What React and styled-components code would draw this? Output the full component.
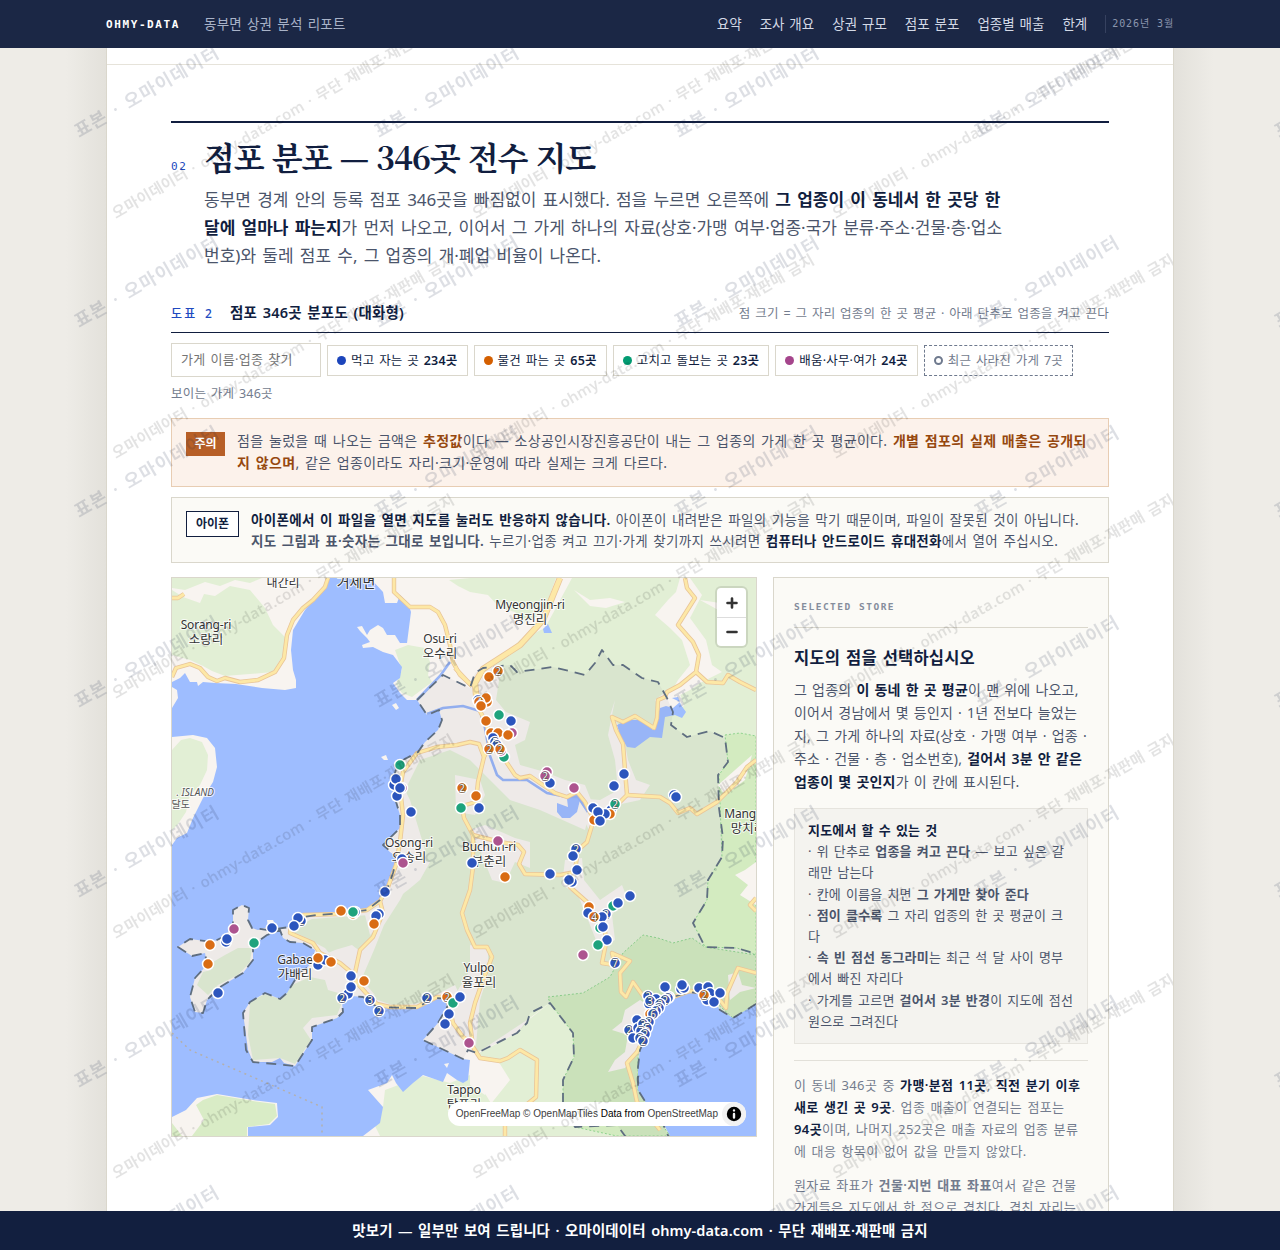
import React from 'react';
import styled, { createGlobalStyle, css } from 'styled-components';

const SANS = '"Noto Sans", "Noto Sans CJK KR", sans-serif';
const SERIF = '"Noto Serif CJK KR", "Noto Serif KR", "Nanum Myeongjo", serif';
const MONO = '"DejaVu Sans Mono", "Noto Sans Mono CJK KR", monospace';

const C = {
  navy: '#111e3f',
  body: '#4b556b',
  muted: '#737c8e',
  blue: '#2049c0',
  line: '#dad7cc',
  paper: '#fbfaf6',
  warn: '#96480f',
};

const GlobalStyle = createGlobalStyle`
  * { box-sizing: border-box; }
  html, body { margin: 0; height: 1250px; overflow: hidden; }
  body { background: #eeece7; font-family: ${SANS}; color: ${C.body}; }
  p, h2, h3 { margin: 0; }
`;

const Screen = styled.div`
  position: relative;
  height: 1250px;
  overflow: hidden;
  display: flex;
  flex-direction: column;
`;

const Nav = styled.header`
  position: relative;
  z-index: 5;
  flex: none;
  height: 48px;
  background: #1b2745;
  display: flex;
  justify-content: center;
`;
const NavInner = styled.div`
  width: 1068px;
  display: flex;
  align-items: center;
`;
const Brand = styled.span`
  font: 700 11px/1 ${MONO};
  letter-spacing: 1.6px;
  color: #fff;
  margin-right: 24px;
`;
const NavTitle = styled.span`
  margin-top: -3px;
  font-size: 13.5px;
  letter-spacing: 0.2px;
  word-spacing: 1.4px;
  color: #a9b3c8;
`;
const NavLinks = styled.nav`
  margin: -3px 0 0 auto;
  display: flex;
  gap: 18px;
  font-size: 13.5px;
  word-spacing: 1.4px;
  color: #d3d9e6;
`;
const NavDate = styled.span`
  margin-left: 18px;
  padding-left: 6px;
  border-left: 1px solid #36415f;
  font: 400 10px/18px ${MONO};
  letter-spacing: 0.9px;
  color: #8b96ae;
`;

const SheetShadow = styled.div`
  flex: 1;
  min-height: 0;
  display: flex;
  justify-content: center;
  background: linear-gradient(90deg, #eeece7 66px, #e3e1db 106px, #e3e1db 1174px, #eeece7 1214px);
`;
const Sheet = styled.main`
  flex: none;
  width: 1068px;
  overflow: hidden;
  position: relative;
  background: #fff;
  border: solid ${C.line};
  border-width: 0 1px;
`;
const PrevEdge = styled.div`
  height: 17px;
  border-bottom: 1px solid #e6e3da;
`;
const Section = styled.section`
  margin: 56px 64px 0;
  border-top: 2px solid ${C.navy};
`;
const SectionHead = styled.div`
  display: grid;
  grid-template-columns: 33px 1fr;
  align-items: baseline;
  padding-top: 10px;
`;
const SectionNo = styled.span`
  font: 400 11px/1 ${MONO};
  letter-spacing: 1.6px;
  color: ${C.blue};
`;
const Title = styled.h2`
  font: 700 32px/46px ${SERIF};
  letter-spacing: -1.1px;
  word-spacing: 1.2px;
  color: ${C.navy};
`;
const Lead = styled.p`
  grid-column: 2;
  width: 806px;
  margin-top: 7px;
  font-size: 17px;
  line-height: 28px;
  word-spacing: 1.8px;
`;
const B = styled.b`
  font-weight: 600;
  white-space: ${(p) => (p.$keep ? 'nowrap' : 'inherit')};
  color: ${(p) => (p.$tone === 'warn' ? C.warn : p.$tone === 'soft' ? 'inherit' : C.navy)};
`;

const FigHead = styled.div`
  display: flex;
  align-items: center;
  margin-top: 31px;
  height: 32px;
  border-bottom: 1px solid ${C.navy};
  padding-bottom: 8px;
`;
const FigNo = styled.span`
  margin-top: 2px;
  font: 500 12px/1 ${SANS};
  letter-spacing: 2.2px;
  word-spacing: 2.2px;
  color: ${C.blue};
  margin-right: 16px;
`;
const FigTitle = styled.h3`
  margin-top: -2px;
  font: 600 14.5px/20px ${SANS};
  letter-spacing: 0.2px;
  word-spacing: 1.6px;
  color: ${C.navy};
`;
const FigNote = styled.span`
  margin-left: auto;
  font-size: 12.5px;
  letter-spacing: 0.24px;
  word-spacing: 1.2px;
  color: ${C.muted};
`;

const Filters = styled.div`
  display: flex;
  flex-wrap: wrap;
  align-items: center;
  gap: 6px;
  margin-top: 10px;
  letter-spacing: 0.2px;
  word-spacing: 1.3px;
`;
const Search = styled.div`
  width: 150px;
  height: 34px;
  padding: 0 9px;
  border: 1px solid ${C.line};
  background: #fff;
  font-size: 13px;
  letter-spacing: 0.3px;
  line-height: 31px;
  color: #757575;
`;
const Chip = styled.div`
  display: flex;
  align-items: center;
  gap: 5px;
  height: 31px;
  padding: 0 9px;
  border: 1px ${(p) => (p.$gone ? 'dashed #6f7a8e' : `solid ${C.line}`)};
  background: #fff;
  font-size: 12.5px;
  color: ${(p) => (p.$gone ? C.muted : C.navy)};
  span { padding-bottom: 2px; }
`;
const Bullet = styled.i`
  width: 9px;
  height: 9px;
  border-radius: 50%;
  ${(p) => (p.$color ? css`background: ${p.$color};` : css`border: 2px solid #6f7a8e;`)}
`;
const Count = styled.div`
  width: 100%;
  padding-top: 1px;
  font-size: 12.5px;
  line-height: 19px;
  color: ${C.muted};
`;

const Callout = styled.div`
  display: flex;
  align-items: flex-start;
  gap: 12px;
  margin-top: ${(p) => (p.$warn ? 15 : 10)}px;
  height: ${(p) => (p.$warn ? 69 : 66)}px;
  padding: 12px 14px;
  border: 1px solid ${(p) => (p.$warn ? '#e8cdb3' : C.line)};
  background: ${(p) => (p.$warn ? '#fcf2eb' : C.paper)};
  font-size: ${(p) => (p.$warn ? 14 : 13.5)}px;
  line-height: ${(p) => (p.$warn ? 22 : 20.8)}px;
  letter-spacing: ${(p) => (p.$warn ? 0.34 : 0.31)}px;
  word-spacing: 1.5px;
  p { margin-top: ${(p) => (p.$warn ? -1 : 0)}px; }
`;
const Tag = styled.span`
  flex: none;
  margin-top: 1px;
  width: ${(p) => (p.$warn ? 39 : 53)}px;
  text-align: center;
  border: 1px solid ${(p) => (p.$warn ? '#b75f27' : C.navy)};
  background: ${(p) => (p.$warn ? '#b75f27' : '#fff')};
  color: ${(p) => (p.$warn ? '#fff' : C.navy)};
  font-weight: 600;
  font-size: 12px;
  letter-spacing: 0;
  line-height: ${(p) => (p.$warn ? 22 : 24)}px;
`;

const Columns = styled.div`
  display: grid;
  grid-template-columns: 586px 336px;
  gap: 16px;
  align-items: start;
  margin-top: 14px;
`;
const MapBox = styled.div`
  position: relative;
  height: 560px;
  border: 1px solid ${C.line};
  overflow: hidden;
  svg.map { display: block; width: 584px; height: 558px; }
`;
const ZoomCtl = styled.div`
  position: absolute;
  top: 10px;
  right: 10px;
  width: 29px;
  border-radius: 4px;
  background: #fff;
  box-shadow: 0 0 0 2px rgba(0, 0, 0, 0.1);
`;
const ZoomBtn = styled.div`
  height: 29px;
  display: grid;
  place-items: center;
  & + & { border-top: 1px solid #ddd; }
`;
const Attribution = styled.div`
  position: absolute;
  right: 10px;
  bottom: 10px;
  height: 24px;
  padding: 0 28px 0 8px;
  border-radius: 12px;
  background: #fff;
  font: 400 10px/24px "Liberation Sans", sans-serif;
  white-space: nowrap;
  color: #000;
  span { color: #404040; }
`;
const InfoDot = styled.div`
  position: absolute;
  top: 0;
  right: 0;
  width: 24px;
  height: 24px;
  border-radius: 12px;
  background: #f2f2f2;
  svg { display: block; }
`;

const Panel = styled.aside`
  height: 700px;
  padding: 20px;
  border: 1px solid ${C.line};
  background: ${C.paper};
  letter-spacing: 0.2px;
  word-spacing: 1.4px;
`;
const PanelKicker = styled.div`
  height: 30px;
  border-bottom: 1px solid ${C.line};
  font: 700 9.5px/18px ${MONO};
  letter-spacing: 1.5px;
  word-spacing: 0;
  color: #858d9c;
`;
const PanelTitle = styled.h3`
  margin-top: 18px;
  font: 600 16.5px/24px ${SANS};
  color: ${C.navy};
`;
const PanelText = styled.p`
  margin: 8px -4px 0 0;
  font-size: 14px;
  line-height: 23px;
  letter-spacing: 0.23px;
  word-spacing: 1.1px;
`;
const Tips = styled.div`
  margin-top: 15px;
  height: 236px;
  padding: 11px 13px;
  border: 1px solid #e6e4de;
  background: #f4f3ef;
  font-size: 13px;
  line-height: 21.2px;
`;
const Note = styled.p`
  margin-top: ${(p) => (p.$first ? 16 : 12)}px;
  ${(p) => p.$first && css`border-top: 1px solid #e2e0d9; padding-top: 13px;`}
  font-size: 13px;
  line-height: 22px;
  letter-spacing: 0.4px;
  color: ${C.muted};
`;

const BottomBar = styled.footer`
  position: absolute;
  z-index: 5;
  left: 0;
  right: 0;
  bottom: 0;
  height: 39px;
  background: #121f3f;
  color: #fff;
  font-weight: 600;
  font-size: 14.5px;
  letter-spacing: 0.1px;
  word-spacing: 1.6px;
  line-height: 38px;
  text-align: center;
`;
const Watermark = styled.svg`
  position: absolute;
  z-index: 3;
  inset: 0;
  width: 100%;
  height: 100%;
  pointer-events: none;
`;

const links = ['요약', '조사 개요', '상권 규모', '점포 분포', '업종별 매출', '한계'];
const chips = [
  ['#1c45bb', '먹고 자는 곳', '234곳'],
  ['#d45f00', '물건 파는 곳', '65곳'],
  ['#029b72', '고치고 돌보는 곳', '23곳'],
  ['#a5458c', '배움·사무·여가', '24곳'],
];

const bay = `M330 578L318 595 305 610 299 620 293 630 291 650 293 670 296 680 296 688 285 690 262 688 236 684 215 683 203 682 198 686 197 682 190 682 185 673 180 678 172 682V687L177 690 178 698 172 708V737L193 735 207 738 215 748 217 767 213 782 203 798 193 818 187 833 177 838 172 845V1136H363L380 1123 383 1107 368 1090 387 1083 392 1075 396 1083 403 1092 413 1083 423 1075 443 1082 447 1073 457 1080 463 1083 468 1080 470 1060 463 1059 423 1040 438 1023 447 1007 453 999 433 998 417 1008 377 1007 363 997 352 996 342 1002 343 1012 337 1018 312 1027 312 1040 295 1066 284 1063 280 1058 272 1062 253 1062 248 1050 243 1013 250 1002 265 993 280 999 287 993 300 972 307 968 313 960 315 950 303 943 290 942 283 938 280 930 267 935 253 945 253 960 243 973 220 987 207 1000 203 1013 195 1012 190 997 195 978 207 965 205 953 192 956 178 947 190 939 213 942 223 937 233 927 233 910 242 905 249 908 248 920 252 928 258 930 268 927 267 920 273 920 277 928 290 927 297 918 317 915 343 913 367 910 380 900 388 887 393 873 397 857 390 852 383 845 400 828 400 815 394 795 393 782 397 765 403 760 418 752 425 742 438 730 442 720 439 710 427 715 417 700 407 700 400 693 393 683 400 678 402 667 393 655 383 652 373 647 363 648 362 645 370 642 367 638 360 631 357 627 362 626 367 635 370 630 378 625 383 628 387 635 395 635 400 643 407 643 411 612 408 603 400 595 397 603 385 603 383 592 370 578Z`;
const eastSea = 'M756 1004L733 1018 720 1010 713 1000 704 994 690 992 673 997 660 1008 650 1027 640 1050 638 1067 638 1090 648 1106 660 1117 670 1136H756Z';
const lake = 'M617 725L627 720 640 720 653 730 660 708 666 706 673 708 680 702 672 698 678 697 681 705 686 712 682 718 675 715 665 717 662 738 650 737 635 748 627 747 620 735Z';
const district = 'M417 700L443 675 470 688 475 673 483 668 510 665 517 672 553 667 585 675 595 663 602 650 613 665 623 665 642 678 658 682 667 698 673 712 671 725 687 737 710 731 725 738 728 762 718 775 719 808 723 838 722 857 708 880 707 900 693 923 705 947 737 948 753 953 770 960 770 1000 756 1004 733 1018 720 1010 713 1000 704 994 690 992 673 997 660 1008 650 1027 640 1050 638 1067 638 1090 648 1106 660 1117 670 1140 628 1140 617 1125 575 1127 563 1103 563 1080 574 1057 573 1033 550 1003 530 1013 527 1023 517 1033 477 1053 468 1050 463 1059 423 1040 438 1023 447 1007 453 999 433 998 417 1008 377 1007 363 997 352 996 342 1002 343 1012 337 1018 312 1027 312 1040 295 1066 253 1062 246 1050 243 1013 250 1002 265 993 280 999 287 993 300 972 307 968 313 960 315 950 303 943 290 942 283 938 280 930 267 935 253 945 253 960 243 973 220 987 207 1000 203 1013 195 1012 190 997 195 978 207 965 205 953 192 956 178 947 190 939 213 942 223 937 233 927 233 910 242 905 249 908 248 920 252 928 268 930 290 927 297 918 317 915 343 913 367 910 380 900 388 887 393 873 397 857 383 845 400 828 400 815 394 795 393 782 397 765 403 760 418 752 425 742 438 730 442 720 439 710 427 715Z';

const woods = [
  'M172 590L183 597 200 603 204 594 215 596 230 586 250 590 265 608 273 625 285 637 283 655 273 672 250 674 237 675 225 676 212 671 203 666 190 660 172 655Z',
  'M172 750L181 740 190 738 202 742 208 755 207 770 200 785 190 795 186 812 178 824 172 830Z',
  'M172 578H262L250 583 235 580 220 586 205 582 185 590 172 588Z',
  'M449 580L470 578H556L548 600 540 615 525 622 515 612 500 608 488 595 470 592 458 586Z',
  'M572 578H756V1136H566L574 1057 550 1003 527 1020 477 1053 480 1085 495 1110 530 1100 545 1136H380L372 1120 383 1107 385 1090 423 1076 450 1083 470 1075 478 1056 462 1000 455 985 420 1003 395 1006 372 998 362 978 374 950 384 925 400 900 425 850 410 800 405 790 420 760 450 750 470 760 480 770 510 800 540 810 585 830 590 810 560 800 520 765 495 735 485 690 492 668 520 640 545 628Z',
  'M477 1054L517 1033 527 1021 550 1003 573 1033 574 1057 563 1080V1103L575 1127 617 1125 628 1136H450L478 1120 510 1080 500 1064Z',
  'M395 650L408 645 425 648 430 662 428 675 432 682 412 697 402 693 396 684 402 670Z',
  'M250 1002L265 994 280 999 292 985 310 977 325 980 328 990 345 995 337 1015 312 1018 303 1028 311 1040 295 1064 280 1058 253 1060 248 1035Z',
  'M300 925L312 919 340 917 370 915 376 930 366 945 350 955 335 960 325 948 300 935 292 932Z',
  'M213 962L225 955 238 948 252 948 250 962 238 975 218 985 208 995 197 985 203 972 211 970Z',
];
const clearings = [
  'M574 590L590 600 610 598 625 602 606 608 590 606Z',
  'M655 615L668 600 676 592 680 578H690L702 595 690 618 706 640 712 665 722 672 700 683 690 690 665 703 678 680 690 665 682 640 670 628Z',
  'M700 600L720 603 735 615 722 612Z',
  'M615 700L610 716 622 728 628 760 636 780 650 785 640 800 612 806 590 832 582 816 575 798 600 800 618 790 615 760 608 735Z',
  'M655 700L668 690 680 694 684 706 664 716Z',
  'M483 672L500 674 496 700 506 712 530 722 525 740 515 745 520 765 545 772 565 780 585 785 593 805 575 822 530 800 500 785 484 765 480 740Z',
  'M455 775L480 780 485 795 475 815 456 812Z',
  'M470 830L485 825 515 838 530 842 530 868 515 862 505 883 492 880 480 850Z',
  'M565 860L582 858 584 880 600 900 622 885 626 895 612 915 615 940 600 950 590 925 578 895 562 885Z',
  'M397 850L410 858 430 862 420 880 408 890 388 905 380 925 370 935 365 915Z',
  'M335 950L352 945 365 955 362 980 375 995 350 992 330 980 308 975 312 960Z',
  'M470 945L488 950 488 975 480 1000 476 1045 463 1056 430 1040 447 1010 458 990 470 970Z',
  'M477 1058L500 1062 495 1080 485 1095 470 1085 470 1062Z',
  'M735 875L745 870 756 862V905L740 895 748 885Z',
  'M718 785L735 770 752 755 745 780 725 795Z',
  'M625 1010L640 1000 648 1005 640 1045 625 1068 608 1072 615 1060 625 1052 628 1035 612 1030 622 1022Z',
  'M728 975L738 972 742 985 756 988 740 992 730 1000Z',
];
const park = 'M548 997L583 993 610 977 623 953 643 935 658 938 673 943 692 938 705 947 756 955V1005L733 1018 713 1000 690 992 673 997 650 1010 638 1050V1090L670 1136H617L575 1127 563 1103V1080L574 1057 573 1033 550 1003Z';
const parkEast = 'M725 735L740 733 756 736V955L737 948 705 947 693 923 707 900 708 880 722 857 719 775 728 762Z';

const rivers = [
  'M427 714L443 708 463 706 480 711 485 728 490 756 497 775 503 780 527 780 547 793 567 797 578 797 588 812',
  'M450 662L440 676 417 700',
];
const roads = [
  'M172 677L176 668 190 664 200 668 208 677 217 681 225 678 240 682 258 680 275 672 284 658 287 635 293 620 303 608 313 600 325 587 328 578',
  'M172 598L178 598 184 594',
  'M394 578V592L410 607 430 607 438 612 445 625 450 645 453 662 460 675 472 686',
  'M472 686L455 668',
  'M477 705L487 725 490 745 505 760 515 775 520 778 530 776 540 783 555 793 567 797 577 792 585 802 594 820',
  'M490 745L484 757 478 782 476 802 462 806 464 818 473 835 500 842 518 845 524 852 519 864 525 874 560 875 575 872',
  'M484 757L479 744 470 742 457 745 437 747 417 753 403 772 400 788 403 815 400 842 396 865 388 887 380 901 367 910 337 914 303 915 291 924 290 933 313 943 320 953 340 963 352 973 357 983 366 993 377 1004 390 1007 417 1007 437 997 447 997 453 1023 463 1037 469 1041',
  'M380 901L383 913 373 937 360 950 355 973',
  'M473 835V867L470 890 462 913 467 930 475 947 487 947 492 957 483 980 475 1003 470 1023 473 1047 480 1058 500 1061 508 1058 520 1050 537 1060 536 1097 520 1110 505 1125V1136',
  'M685 578L687 588 695 598 678 625 693 642 699 655 696 672 680 685 667 692 665 697 658 700 657 718 654 728 635 716 623 722 612 717 616 730 623 744 625 770 627 795 617 805 593 822 587 842 578 850 575 870 570 887 587 902 593 917 605 930 606 943 602 963 615 965 612 953 630 961 620 973 621 992 626 997 633 982 643 996 655 1008 643 1040 637 1052 627 1063 633 1083 637 1102 648 1115 660 1130',
  'M696 672L707 682 723 683 728 675 740 682 756 690',
  'M627 795L660 797 670 803 678 813 690 808 697 814 717 802 737 782 747 767 756 760',
  'M655 1008L668 999 690 991 710 993 720 1000 726 1008 727 993 738 968 756 973',
  'M756 898L750 905 756 911',
];
const highway = 'M560 578L543 620 520 645 483 669 475 683 477 705';

const COLORS = { b: '#2c55bd', o: '#d96c14', g: '#1ea37d', p: '#ad548f' };
const stores = [
  ['p', 512, 733], ['p', 402, 788], ['g', 504, 757], ['b', 478, 700], ['o', 487, 702], ['o', 489, 677], ['o', 498, 671, 2],
  ['o', 486, 698], ['o', 479, 702, 4], ['o', 481, 706], ['g', 499, 715], ['b', 511, 721], ['o', 486, 721], ['o', 491, 733],
  ['o', 498, 733], ['o', 508, 735], ['b', 493, 738], ['b', 495, 742, 5], ['b', 497, 745, 3], ['p', 501, 751], ['o', 500, 749, 2], ['o', 489, 749, 2],
  ['b', 550, 783], ['p', 547, 772], ['p', 545, 776, 2], ['p', 574, 788], ['b', 624, 774], ['b', 614, 786], ['b', 674, 795],
  ['b', 676, 797], ['g', 400, 765], ['b', 394, 785], ['b', 396, 779], ['b', 397, 796], ['b', 400, 788], ['b', 411, 812],
  ['o', 462, 788, 2], ['o', 476, 796], ['g', 461, 808], ['b', 479, 808], ['b', 611, 810], ['o', 610, 814], ['g', 615, 804, 2],
  ['o', 594, 820], ['b', 593, 808], ['b', 605, 814], ['b', 598, 812], ['b', 600, 821], ['b', 402, 859], ['p', 403, 863],
  ['p', 498, 841], ['b', 472, 863], ['b', 576, 849, 2], ['b', 573, 856], ['b', 577, 870], ['b', 550, 874], ['b', 572, 882],
  ['b', 569, 880], ['o', 505, 877], ['b', 385, 892], ['o', 341, 911], ['o', 353, 914], ['b', 355, 912], ['g', 353, 912], ['b', 379, 914], ['b', 376, 916],
  ['o', 374, 924], ['b', 301, 921, 2], ['b', 298, 918], ['b', 294, 926], ['b', 272, 928], ['p', 234, 929], ['b', 226, 942],
  ['b', 227, 939], ['g', 254, 943], ['o', 210, 945], ['o', 208, 964], ['b', 218, 993], ['b', 318, 965], ['b', 325, 960],
  ['o', 318, 958], ['o', 331, 962], ['b', 351, 976], ['o', 364, 981], ['b', 348, 994], ['b', 351, 987], ['b', 342, 998, 2],
  ['b', 370, 1000, 3], ['b', 379, 1011, 2], ['b', 427, 998, 2], ['o', 447, 997, 2], ['g', 453, 1003], ['b', 460, 997],
  ['b', 449, 1014], ['b', 445, 1024], ['p', 469, 1043], ['o', 589, 907], ['b', 588, 913], ['b', 630, 896], ['g', 613, 906],
  ['b', 618, 903], ['b', 606, 914, 2], ['b', 602, 917], ['o', 594, 917, 4], ['g', 600, 928], ['b', 603, 927], ['b', 607, 940],
  ['g', 598, 945], ['p', 583, 955], ['b', 615, 963, 7], ['b', 665, 987], ['b', 681, 989], ['b', 684, 988], ['b', 682, 985],
  ['b', 699, 988], ['b', 708, 987], ['b', 710, 993], ['b', 707, 1000], ['b', 714, 1002], ['b', 720, 993], ['o', 704, 995, 2],
  ['b', 648, 996, 2], ['b', 656, 999], ['b', 649, 1004], ['b', 669, 997], ['b', 650, 1001, 3], ['b', 668, 998, 3], ['b', 665, 1000, 2],
  ['b', 660, 1004, 2], ['o', 650, 1014], ['b', 659, 1008, 3], ['b', 656, 1011, 4], ['b', 653, 1014, 6], ['b', 637, 1020],
  ['b', 629, 1030, 2], ['b', 633, 1038], ['b', 638, 1028], ['b', 649, 1022, 2], ['b', 643, 1024, 3], ['b', 647, 1028, 5],
  ['b', 641, 1031, 7], ['b', 645, 1034, 2], ['b', 640, 1038, 3], ['b', 643, 1041, 2],
];
const places = [
  [206, 629, 'Sorang-ri', '소랑리'], [440, 643, 'Osu-ri', '오수리'], [530, 609, 'Myeongjin-ri', '명진리'],
  [409, 847, 'Osong-ri', '오송리'], [489, 851, 'Buchun-ri', '부춘리'], [295, 964, 'Gabae', '가배리'],
  [479, 972, 'Yulpo', '율포리'], [464, 1094, 'Tappo', '탑포리'], [748, 818, 'Mangchi', '망치리'],
];

function StoreMap() {
  return (
    <svg className="map" viewBox="172 578 584 558">
      <rect x="172" y="578" width="584" height="558" fill="#f8f4f0" />
      <g fill="#e2efd5">{woods.map((d) => <path key={d} d={d} />)}</g>
      <path d={parkEast} fill="#d3ebc0" stroke="#8fd48e" strokeDasharray="2 2" />
      <path d={park} fill="#d3ebc0" stroke="#8fd48e" strokeDasharray="2 2" />
      <g fill="#f8f4f0">{clearings.map((d) => <path key={d} d={d} />)}</g>
      <g fill="#9ebdff">
        <path d={bay} />
        <path d={eastSea} />
        <path d={lake} />
        <path d="M557 803L568 807 567 799 577 793 580 800 577 812 570 818 562 818 557 812Z" />
        <path d="M543 629L548 624 552 633 544 633Z" />
      </g>
      <g fill="#f8f4f0">
        <path d="M392 705L396 703 399 708 396 710ZM381 757L386 755 388 760 384 760ZM444 1064L449 1063 447 1068Z" />
        <path d="M172 1117L186 1110 197 1098 217 1094 253 1100 277 1103 278 1117 270 1125 248 1127V1136H172Z" />
      </g>
      <path d="M203 1100L217 1095 253 1101 275 1104 277 1116 269 1124 247 1127V1136H192L204 1120 196 1105Z" fill="#d9ecc6" />
      <path d="M172 1123L182 1136H172Z" fill="#d9ecc6" />
      <g fill="none" stroke="#98b5f6" strokeWidth="2.6">{rivers.map((d) => <path key={d} d={d} />)}</g>
      <path d={district} fill="rgba(17,30,63,.045)" />
      <g fill="none" strokeLinejoin="round">
        <g stroke="#e9c598" strokeWidth="4.4">{roads.map((d) => <path key={d} d={d} />)}</g>
        <path d={highway} stroke="#e9c598" strokeWidth="6.4" />
        <g stroke="#fde8a6" strokeWidth="2.8">{roads.map((d) => <path key={d} d={d} />)}</g>
        <path d={highway} stroke="#fde8a6" strokeWidth="4.8" />
        <path d="M172 1033L190 1050 322 1107V1136" stroke="#b3b0ae" strokeWidth="1.5" strokeDasharray="2 4" />
        <path d={district} stroke="#5f6e80" strokeWidth="1.8" strokeDasharray="10 7" />
      </g>
      <g fontFamily={SANS} fontSize="12" fill="#333" textAnchor="middle" stroke="rgba(255,255,255,.8)" strokeWidth="2" paintOrder="stroke">
        <text x="283" y="587">내간리</text>
        <text x="356" y="587" fontSize="14">거제면</text>
        {places.map(([x, y, en, ko]) => (
          <React.Fragment key={en}>
            <text x={x} y={y} letterSpacing="-.15">{en}</text>
            <text x={x} y={y + 14.5} fontSize="12.5">{ko}</text>
          </React.Fragment>
        ))}
        <g fontSize="10" fill="#555">
          <text x="214" y="796" textAnchor="end" fontStyle="italic">. ISLAND</text>
          <text x="190" y="808" textAnchor="end">달도</text>
        </g>
      </g>
      <g fontFamily={SANS} fontSize="10" textAnchor="middle">
        {stores.map(([c, x, y, n], i) => (
          <g key={i}>
            <circle cx={x} cy={y} r="5.5" fill={COLORS[c]} stroke="#fff" strokeWidth="1.5" />
            {n && <text x={x} y={y + 3.6} fill="#fff" stroke="#555" strokeWidth="1" paintOrder="stroke">{n}</text>}
          </g>
        ))}
      </g>
    </svg>
  );
}

function SampleMarks() {
  return (
    <Watermark>
      <defs>
        <pattern id="sample" width="300" height="190" patternUnits="userSpaceOnUse">
          <text x="150" y="97" transform="rotate(-30 150 97)" textAnchor="middle" fontFamily={SANS} fontSize="18" fontWeight="600" letterSpacing="1.2" wordSpacing="2" fill="#111e3f" fillOpacity=".14">표본 · 오마이데이터</text>
        </pattern>
      </defs>
      <rect width="1280" height="1250" fill="url(#sample)" />
    </Watermark>
  );
}

function OwnerMarks() {
  return (
    <Watermark>
      <defs>
        <pattern id="owner" y="-54" width="360" height="240" patternUnits="userSpaceOnUse">
          <text x="9" y="225" transform="rotate(-30 9 225)" fontFamily={SANS} fontSize="15" fontWeight="600" letterSpacing=".3" wordSpacing="1.6" fill="#000" fillOpacity=".11">오마이데이터 · ohmy-data.com · 무단 재배포·재판매 금지</text>
        </pattern>
      </defs>
      <rect width="1066" height="1202" fill="url(#owner)" />
    </Watermark>
  );
}

export default function App() {
  return (
    <Screen>
      <GlobalStyle />
      <Nav>
        <NavInner>
          <Brand>OHMY-DATA</Brand>
          <NavTitle>동부면 상권 분석 리포트</NavTitle>
          <NavLinks>{links.map((l) => <span key={l}>{l}</span>)}</NavLinks>
          <NavDate>2026년 3월</NavDate>
        </NavInner>
      </Nav>
      <SheetShadow>
        <Sheet>
          <PrevEdge />
          <Section>
            <SectionHead>
              <SectionNo>02</SectionNo>
              <Title>점포 분포 — 346곳 전수 지도</Title>
              <Lead>
                동부면 경계 안의 등록 점포 346곳을 빠짐없이 표시했다. 점을 누르면 오른쪽에 <B>그 업종이 이 동네서 한 곳당 한 달에 얼마나 파는지</B>가 먼저 나오고, 이어서 그 가게 하나의 자료(상호·가맹 여부·업종·국가 분류·주소·건물·층·업소번호)와 둘레 점포 수, 그 업종의 개·폐업 비율이 나온다.
              </Lead>
            </SectionHead>
            <FigHead>
              <FigNo>도표 2</FigNo>
              <FigTitle>점포 346곳 분포도 (대화형)</FigTitle>
              <FigNote>점 크기 = 그 자리 업종의 한 곳 평균 · 아래 단추로 업종을 켜고 끈다</FigNote>
            </FigHead>
            <Filters>
              <Search>가게 이름·업종 찾기</Search>
              {chips.map(([color, label, n]) => (
                <Chip key={label}><Bullet $color={color} /><span>{label} <B>{n}</B></span></Chip>
              ))}
              <Chip $gone><Bullet /><span>최근 사라진 가게 7곳</span></Chip>
              <Count>보이는 가게 346곳</Count>
            </Filters>
            <Callout $warn>
              <Tag $warn>주의</Tag>
              <p>점을 눌렀을 때 나오는 금액은 <B $tone="warn">추정값</B>이다 — 소상공인시장진흥공단이 내는 그 업종의 가게 한 곳 평균이다. <B $tone="warn">개별 점포의 실제 매출은 공개되지 않으며</B>, 같은 업종이라도 자리·크기·운영에 따라 실제는 크게 다르다.</p>
            </Callout>
            <Callout>
              <Tag>아이폰</Tag>
              <p><B>아이폰에서 이 파일을 열면 지도를 눌러도 반응하지 않습니다.</B> 아이폰이 내려받은 파일의 기능을 막기 때문이며, 파일이 잘못된 것이 아닙니다. <B $tone="soft">지도 그림과 표·숫자는 그대로 보입니다.</B> 누르기·업종 켜고 끄기·가게 찾기까지 쓰시려면 <B>컴퓨터나 안드로이드 휴대전화</B>에서 열어 주십시오.</p>
            </Callout>
            <Columns>
              <MapBox>
                <StoreMap />
                <ZoomCtl>
                  <ZoomBtn><svg width="12" height="12"><path d="M6 1.5v9M1.5 6h9" stroke="#333" strokeWidth="2.6" strokeLinecap="round" /></svg></ZoomBtn>
                  <ZoomBtn><svg width="12" height="12"><path d="M1.5 6h9" stroke="#333" strokeWidth="2.6" strokeLinecap="round" /></svg></ZoomBtn>
                </ZoomCtl>
                <Attribution>
                  <span>OpenFreeMap</span> <span>© OpenMapTiles</span> Data from <span>OpenStreetMap</span>
                  <InfoDot>
                    <svg width="24" height="24" viewBox="0 0 20 20" fillRule="evenodd"><path d="M4 10a6 6 0 1 0 12 0 6 6 0 1 0-12 0m5-3a1 1 0 1 0 2 0 1 1 0 1 0-2 0m0 3a1 1 0 1 1 2 0v3a1 1 0 1 1-2 0" /></svg>
                  </InfoDot>
                </Attribution>
              </MapBox>
              <Panel>
                <PanelKicker>SELECTED STORE</PanelKicker>
                <PanelTitle>지도의 점을 선택하십시오</PanelTitle>
                <PanelText>그 업종의 <B>이 동네 한 곳 평균</B>이 맨 위에 나오고, 이어서 경남에서 몇 등인지 · 1년 전보다 늘었는지, 그 가게 하나의 자료(상호 · 가맹 여부 · 업종 · 주소 · 건물 · 층 · 업소번호), <B>걸어서 3분 안 같은 업종이 몇 곳인지</B>가 이 칸에 표시된다.</PanelText>
                <Tips>
                  <B>지도에서 할 수 있는 것</B><br />
                  · 위 단추로 <B $tone="soft">업종을 켜고 끈다</B> — 보고 싶은 갈래만 남는다<br />
                  · 칸에 이름을 치면 <B $tone="soft">그 가게만 찾아 준다</B><br />
                  · <B $tone="soft">점이 클수록</B> 그 자리 업종의 한 곳 평균이 크다<br />
                  · <B $tone="soft">속 빈 점선 동그라미</B>는 최근 석 달 사이 명부에서 빠진 자리다<br />
                  · 가게를 고르면 <B $tone="soft">걸어서 3분 반경</B>이 지도에 점선 원으로 그려진다
                </Tips>
                <Note $first>이 동네 346곳 중 <B>가맹·분점 11곳</B>, <B>직전 분기 이후 새로 생긴 곳 9곳</B>. 업종 매출이 연결되는 점포는 <B $keep>94곳</B>이며, 나머지 252곳은 매출 자료의 업종 분류에 대응 항목이 없어 값을 만들지 않았다.</Note>
                <Note>원자료 좌표가 <B $tone="soft">건물·지번 대표 좌표</B>여서 같은 건물 가게들은 지도에서 한 점으로 겹친다. 겹친 자리는</Note>
              </Panel>
            </Columns>
          </Section>
          <OwnerMarks />
        </Sheet>
      </SheetShadow>
      <SampleMarks />
      <BottomBar>맛보기 — 일부만 보여 드립니다 · 오마이데이터 ohmy-data.com · 무단 재배포·재판매 금지</BottomBar>
    </Screen>
  );
}
